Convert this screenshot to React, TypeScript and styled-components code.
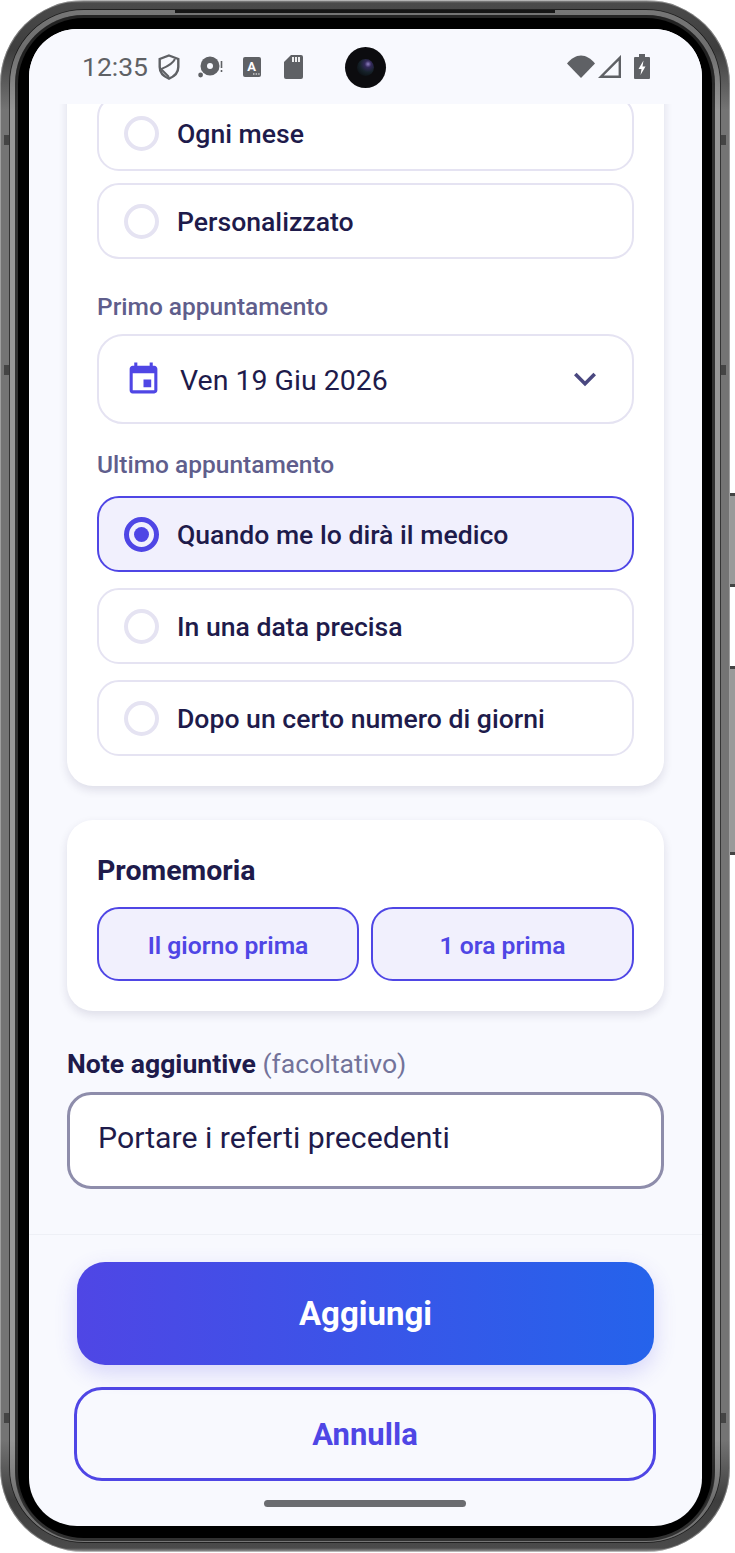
import React from "react";
import styled, { createGlobalStyle } from "styled-components";
import { MdEvent, MdKeyboardArrowDown } from "react-icons/md";

const GlobalStyle = createGlobalStyle`
  html, body {
    margin: 0;
    background: #fff;
  }
  * {
    box-sizing: border-box;
  }
`;

const INDIGO = "#4f46e5";
const INK = "#1e1b4b";
const STATUS = "#5f6165";

function App() {
  return (
    <>
      <GlobalStyle />
      <Page>
        <Phone>
          <TopSlit />
          <SideKey $top={493} $height={94} />
          <SideKey $top={666} $height={189} />
          <Band $side="left" $top={135} />
          <Band $side="left" $top={365} />
          <Band $side="left" $top={1413} />
          <Band $side="right" $top={135} />
          <Band $side="right" $top={365} />
          <Band $side="right" $top={1413} />
          <Bezel>
            <Screen>
              <StatusBar>
                <StatusGroup>
                  <Time>12:35</Time>
                  <StatusIcon $gap={10} width="22" height="26" viewBox="0 0 22 26">
                    <path
                      d="M11 1.5 L20.3 5 V13 C20.3 18.6 16 22.6 11 24.6 C6 22.6 1.7 18.6 1.7 13 V5 Z"
                      fill="none"
                      stroke={STATUS}
                      strokeWidth="2.4"
                    />
                    <path d="M3 15 C8 13 14 11 17 5 M3 15 L11 23" fill="none" stroke={STATUS} strokeWidth="2" />
                  </StatusIcon>
                  <StatusIcon $gap={18} width="25" height="22" viewBox="0 0 25 22">
                    <circle cx="12" cy="10" r="9.5" fill={STATUS} />
                    <circle cx="12" cy="10" r="3" fill="#f8f9fe" />
                    <circle cx="2.6" cy="19" r="2.4" fill={STATUS} />
                    <path d="M23.5 5 V12 M23.5 14 V16" stroke={STATUS} strokeWidth="1.6" />
                  </StatusIcon>
                  <StatusIcon $gap={20} width="18" height="20" viewBox="0 0 18 20">
                    <rect width="18" height="20" rx="2" fill={STATUS} />
                    <text x="8.5" y="13.5" textAnchor="middle" fontFamily="Roboto, sans-serif" fontSize="13" fontWeight="700" fill="#fff">
                      A
                    </text>
                    <path d="M10 17 H11.5 M12.6 17 H14.1 M15.2 17 H16.6" stroke="#fff" strokeWidth="1.2" />
                  </StatusIcon>
                  <StatusIcon $gap={23} width="19" height="24" viewBox="0 0 19 24">
                    <path d="M7 0 H17 A2 2 0 0 1 19 2 V22 A2 2 0 0 1 17 24 H2 A2 2 0 0 1 0 22 V7 Z" fill={STATUS} />
                    <path d="M9 2 V7 M12 2 V7 M15 2 V7" stroke="#fff" strokeWidth="1.8" />
                  </StatusIcon>
                </StatusGroup>
                <Camera>
                  <Lens />
                </Camera>
                <StatusGroup>
                  <StatusIcon $gap={0} width="28" height="23" viewBox="0 0 28 23">
                    <path d="M14 23 L0 8.5 C4 3.5 9 0.5 14 0.5 C19 0.5 24 3.5 28 8.5 Z" fill={STATUS} />
                  </StatusIcon>
                  <StatusIcon $gap={3} width="23" height="23" viewBox="0 0 23 23">
                    <path d="M21.8 2.8 V21.8 H2.8 Z" fill="none" stroke={STATUS} strokeWidth="2.4" />
                  </StatusIcon>
                  <StatusIcon $gap={13} width="16" height="25" viewBox="0 0 16 25">
                    <path d="M5 0 H11 V3 H15 A1 1 0 0 1 16 4 V24 A1 1 0 0 1 15 25 H1 A1 1 0 0 1 0 24 V4 A1 1 0 0 1 1 3 H5 Z" fill={STATUS} />
                    <path d="M9.5 6.5 L4.5 15 H7.5 L6.5 21 L11.5 12.5 H8.5 Z" fill="#fff" />
                  </StatusIcon>
                </StatusGroup>
              </StatusBar>

              <Scroller>
                <Card $pulled>
                  <OptionStack $gap={12}>
                    <Option label="Ogni mese" />
                    <Option label="Personalizzato" />
                  </OptionStack>
                  <FieldLabel $top={33} $bottom={12}>
                    Primo appuntamento
                  </FieldLabel>
                  <DateSelect>
                    <MdEvent size={37} color={INDIGO} />
                    <DateText>Ven 19 Giu 2026</DateText>
                    <MdKeyboardArrowDown size={44} color="#4a4880" />
                  </DateSelect>
                  <FieldLabel $top={26} $bottom={16}>
                    Ultimo appuntamento
                  </FieldLabel>
                  <OptionStack $gap={16}>
                    <Option label="Quando me lo dirà il medico" selected />
                    <Option label="In una data precisa" />
                    <Option label="Dopo un certo numero di giorni" />
                  </OptionStack>
                </Card>

                <Card>
                  <CardTitle>Promemoria</CardTitle>
                  <ChipRow>
                    <Chip>Il giorno prima</Chip>
                    <Chip>1 ora prima</Chip>
                  </ChipRow>
                </Card>

                <NotesLabel>
                  Note aggiuntive <NotesHint>(facoltativo)</NotesHint>
                </NotesLabel>
                <NotesBox>Portare i referti precedenti</NotesBox>
              </Scroller>

              <Footer>
                <PrimaryButton>Aggiungi</PrimaryButton>
                <GhostButton>Annulla</GhostButton>
                <HomeBar />
              </Footer>
            </Screen>
          </Bezel>
        </Phone>
      </Page>
    </>
  );
}

function Option({ label, selected = false }: { label: string; selected?: boolean }) {
  return (
    <OptionRow $selected={selected}>
      <Radio $selected={selected} />
      <OptionText>{label}</OptionText>
    </OptionRow>
  );
}

const Page = styled.div`
  width: 735px;
  height: 1553px;
  overflow: hidden;
  font-family: Roboto, "Noto Sans", sans-serif;
`;

// metal edge: darker along the top and bottom, lighter down the sides
const Phone = styled.div`
  position: relative;
  width: 730px;
  height: 1552px;
  padding: 18px 18px 14px 18px;
  border-radius: 84px;
  background: linear-gradient(
    180deg,
    #a0a0a0 0,
    #4a4a4a 3px,
    #3e3e3e 50px,
    #747474 110px,
    #747474 1440px,
    #3e3e3e 1500px,
    #4a4a4a 1548px,
    #a0a0a0 100%
  );
  box-shadow: inset 0 0 0 1px rgba(255, 255, 255, 0.3);

  &::before {
    content: "";
    position: absolute;
    inset: 9px;
    border-radius: 75px;
    border: 1px solid rgba(0, 0, 0, 0.55);
  }

  &::after {
    content: "";
    position: absolute;
    inset: 10px;
    border-radius: 74px;
    border: 5px solid rgba(255, 255, 255, 0.25);
  }
`;

const Bezel = styled.div`
  position: relative;
  z-index: 1;
  height: 100%;
  padding: 11px 10px 12px 11px;
  border-radius: 66px;
  background: #000;
  box-shadow: 0 0 0 3px rgba(20, 20, 20, 0.7);
`;

const TopSlit = styled.div`
  position: absolute;
  top: 10px;
  left: 175px;
  width: 380px;
  height: 3px;
  background: #161616;
  z-index: 2;
`;

const SideKey = styled.div<{ $top: number; $height: number }>`
  position: absolute;
  top: ${({ $top }) => $top}px;
  right: -5px;
  width: 5px;
  height: ${({ $height }) => $height}px;
  background: #9a9a9a;
  border-top: 3px solid #444;
  border-bottom: 3px solid #444;
`;

const Band = styled.div<{ $side: "left" | "right"; $top: number }>`
  position: absolute;
  top: ${({ $top }) => $top}px;
  ${({ $side }) => $side}: 4px;
  width: 5px;
  height: 10px;
  background: #444;
`;

const Screen = styled.div`
  position: relative;
  display: flex;
  flex-direction: column;
  height: 100%;
  border-radius: 48px;
  overflow: hidden;
  background: #f8f9fe;
`;

const StatusBar = styled.div`
  position: relative;
  flex: none;
  display: flex;
  align-items: center;
  justify-content: space-between;
  height: 75px;
  padding: 0 52px 0 53px;
  z-index: 1;
  background: #f8f9fe;
`;

const StatusGroup = styled.div`
  display: flex;
  align-items: center;
`;

const Time = styled.span`
  font-size: 26.5px;
  color: ${STATUS};
`;

const StatusIcon = styled.svg<{ $gap: number }>`
  display: block;
  margin-left: ${({ $gap }) => $gap}px;
`;

const Camera = styled.div`
  position: absolute;
  left: 316px;
  top: 18px;
  width: 41px;
  height: 41px;
  display: flex;
  align-items: center;
  justify-content: center;
  border-radius: 50%;
  background: #0c0c0f;
`;

const Lens = styled.div`
  width: 17px;
  height: 17px;
  border-radius: 50%;
  background: radial-gradient(circle at 65% 30%, #8f7fc0 0, #33295a 20%, #16222a 50%, #050507 100%);
`;

const Scroller = styled.div`
  flex: 1;
  min-height: 0;
  overflow: hidden;
  padding: 0 38px;
  border-bottom: 1px solid #eef0f6;
`;

const Card = styled.div<{ $pulled?: boolean }>`
  margin: ${({ $pulled }) => ($pulled ? "-39px 0 34px" : "0")};
  padding: 30px;
  border-radius: 26px;
  background: #fff;
  box-shadow: 0 4px 10px rgba(30, 27, 75, 0.12);
`;

const OptionStack = styled.div<{ $gap: number }>`
  display: flex;
  flex-direction: column;
  gap: ${({ $gap }) => $gap}px;
`;

const OptionRow = styled.div<{ $selected: boolean }>`
  display: flex;
  align-items: center;
  gap: 18px;
  height: 76px;
  padding-left: 25px;
  border-radius: 22px;
  border: 2px solid ${({ $selected }) => ($selected ? INDIGO : "#e5e3f2")};
  background: ${({ $selected }) => ($selected ? "#f1f0fd" : "#fff")};
`;

const Radio = styled.div<{ $selected: boolean }>`
  position: relative;
  flex: none;
  width: 35px;
  height: 35px;
  border-radius: 50%;
  border: ${({ $selected }) => ($selected ? `5px solid ${INDIGO}` : "4px solid #e5e3f2")};

  &::after {
    content: "";
    display: ${({ $selected }) => ($selected ? "block" : "none")};
    position: absolute;
    inset: 5px;
    border-radius: 50%;
    background: ${INDIGO};
  }
`;

const OptionText = styled.span`
  margin-top: 0;
  font-size: 26.6px;
  font-weight: 500;
  color: ${INK};
`;

const FieldLabel = styled.div<{ $top: number; $bottom: number }>`
  margin: ${({ $top }) => $top}px 0 ${({ $bottom }) => $bottom}px;
  height: 30px;
  line-height: 30px;
  font-size: 24.5px;
  font-weight: 500;
  color: #5f5e8c;
`;

const DateSelect = styled.div`
  display: flex;
  align-items: center;
  height: 90px;
  padding: 0 25px 0 26px;
  border-radius: 26px;
  border: 2px solid #e5e3f2;
  background: #fff;
`;

const DateText = styled.span`
  flex: 1;
  margin: 3px 0 0 18px;
  font-size: 28.5px;
  color: ${INK};
`;

const CardTitle = styled.div`
  height: 40px;
  line-height: 42px;
  margin-bottom: 17px;
  font-size: 28.5px;
  font-weight: 700;
  color: ${INK};
`;

const ChipRow = styled.div`
  display: grid;
  grid-template-columns: 262px 1fr;
  gap: 12px;
`;

const Chip = styled.div`
  display: flex;
  align-items: center;
  justify-content: center;
  height: 74px;
  padding-top: 3px;
  border-radius: 22px;
  border: 2px solid ${INDIGO};
  background: #f1f0fd;
  font-size: 24.7px;
  font-weight: 600;
  color: ${INDIGO};
`;

const NotesLabel = styled.div`
  height: 36px;
  line-height: 36px;
  margin: 35px 0 10px;
  font-size: 26.6px;
  font-weight: 700;
  color: ${INK};
`;

const NotesHint = styled.span`
  font-weight: 400;
  color: #73739a;
`;

const NotesBox = styled.div`
  height: 97px;
  padding: 25px 28px 0;
  border-radius: 24px;
  border: 3px solid #8e8dab;
  background: #fff;
  font-size: 30.25px;
  line-height: 36px;
  color: ${INK};
`;

const Footer = styled.div`
  flex: none;
  display: flex;
  flex-direction: column;
  align-items: center;
  height: 291px;
  padding-top: 27px;
`;

const PrimaryButton = styled.div`
  display: flex;
  align-items: center;
  justify-content: center;
  width: 577px;
  height: 103px;
  border-radius: 28px;
  background: linear-gradient(90deg, #4f46e5, #2563eb);
  box-shadow: 0 8px 22px rgba(79, 70, 229, 0.2);
  font-size: 33px;
  font-weight: 700;
  color: #fff;
`;

const GhostButton = styled.div`
  display: flex;
  align-items: center;
  justify-content: center;
  width: 582px;
  height: 94px;
  margin: 22px 1px 0 0;
  border-radius: 28px;
  border: 3px solid ${INDIGO};
  font-size: 31px;
  font-weight: 700;
  color: ${INDIGO};
`;

const HomeBar = styled.div`
  width: 202px;
  height: 7px;
  margin: 19px 1px 0 0;
  border-radius: 4px;
  background: #6b6c70;
`;

export default App;
